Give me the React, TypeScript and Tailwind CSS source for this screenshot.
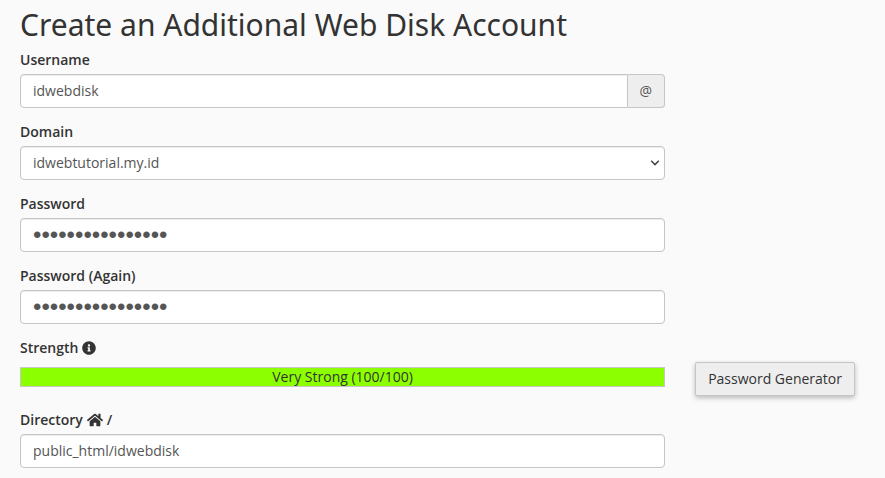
/**
 * WebDiskForm - "Create an Additional Web Disk Account" form
 */

import { useState } from "react";
import type { ReactNode } from "react";
import { FaHome, FaInfoCircle } from "react-icons/fa";

const controlClass =
  "block h-[34px] w-full min-w-0 border border-[#c6c6c6] bg-white px-3 text-[#555] shadow-[inset_0_1px_1px_rgba(0,0,0,0.075)] outline-none focus:border-[#66afe9]";

// Larger type so the masking dots are easy to count
const passwordClass = `${controlClass} rounded font-['Liberation_Sans',sans-serif] text-2xl`;

const DOMAINS = ["idwebtutorial.my.id"];

function Field({ id, label, children }: { id: string; label: ReactNode; children: ReactNode }) {
  return (
    <div className="col-start-1">
      <label htmlFor={id} className="mb-1 flex h-5 items-center gap-1 text-sm font-semibold">
        {label}
      </label>
      {children}
    </div>
  );
}

export default function App() {
  const [username, setUsername] = useState("idwebdisk");
  const [domain, setDomain] = useState(DOMAINS[0]);
  const [password, setPassword] = useState("k7#Qz!v2Lm9@xT4w");
  const [confirm, setConfirm] = useState("k7#Qz!v2Lm9@xT4w");
  const [directory, setDirectory] = useState("public_html/idwebdisk");
  const strength = 100;

  return (
    <main className="min-h-screen bg-[#fafafa] pt-2 pr-[30px] pb-2 pl-5 font-['Open_Sans',sans-serif] text-[#333]">
      <h1 className="mb-2 font-['Noto_Sans',sans-serif] text-[30px] leading-[34px]">
        Create an Additional Web Disk Account
      </h1>

      <form
        className="grid grid-cols-[minmax(0,1fr)_auto] gap-x-[30px] gap-y-[14px]"
        onSubmit={(e) => e.preventDefault()}
      >
        <Field id="username" label="Username">
          <div className="flex">
            <input
              id="username"
              type="text"
              className={`${controlClass} rounded-l pb-0.5 text-sm`}
              value={username}
              onChange={(e) => setUsername(e.target.value)}
            />
            <span className="flex h-[34px] items-center rounded-r border border-l-0 border-[#c6c6c6] bg-[#eee] px-3 text-sm text-[#555]">
              @
            </span>
          </div>
        </Field>

        <Field id="domain" label="Domain">
          <div className="relative">
            <select
              id="domain"
              className={`${controlClass} appearance-none rounded text-sm`}
              value={domain}
              onChange={(e) => setDomain(e.target.value)}
            >
              {DOMAINS.map((d) => (
                <option key={d}>{d}</option>
              ))}
            </select>
            <svg
              className="pointer-events-none absolute top-3 right-[5px] h-[10px] w-[10px]"
              viewBox="0 0 10 10"
              fill="none"
              stroke="#444"
              strokeWidth="1.5"
              aria-hidden="true"
            >
              <path d="M1.2 2.8 5 6.6l3.8-3.8" />
            </svg>
          </div>
        </Field>

        <Field id="password" label="Password">
          <input
            id="password"
            type="password"
            className={passwordClass}
            value={password}
            onChange={(e) => setPassword(e.target.value)}
          />
        </Field>

        <Field id="confirm" label="Password (Again)">
          <input
            id="confirm"
            type="password"
            className={passwordClass}
            value={confirm}
            onChange={(e) => setConfirm(e.target.value)}
          />
        </Field>

        {/* Strength meter, with the generator button beside it */}
        <div className="col-start-1">
          <div id="strength-label" className="flex h-5 items-center gap-1 text-sm font-semibold">
            Strength <FaInfoCircle className="h-[14px] w-[14px]" />
          </div>
          <div
            role="meter"
            aria-labelledby="strength-label"
            aria-valuemin={0}
            aria-valuemax={100}
            aria-valuenow={strength}
            className="my-[9px] h-5 border border-[#c6c6c6] bg-[#8cff00] text-center text-sm leading-[18px]"
          >
            Very Strong ({strength}/100)
          </div>
        </div>
        <button
          type="button"
          className="h-[34px] self-end rounded-[2px] border border-[#c6c6c6] bg-[#eee] px-3 text-sm shadow-[0_2px_5px_rgba(0,0,0,0.26)] hover:bg-[#e2e2e2]"
        >
          Password Generator
        </button>

        <Field
          id="directory"
          label={
            <>
              Directory <FaHome className="h-4 w-4" /> /
            </>
          }
        >
          <input
            id="directory"
            type="text"
            className={`${controlClass} rounded pb-0.5 text-sm`}
            value={directory}
            onChange={(e) => setDirectory(e.target.value)}
          />
        </Field>
      </form>
    </main>
  );
}
